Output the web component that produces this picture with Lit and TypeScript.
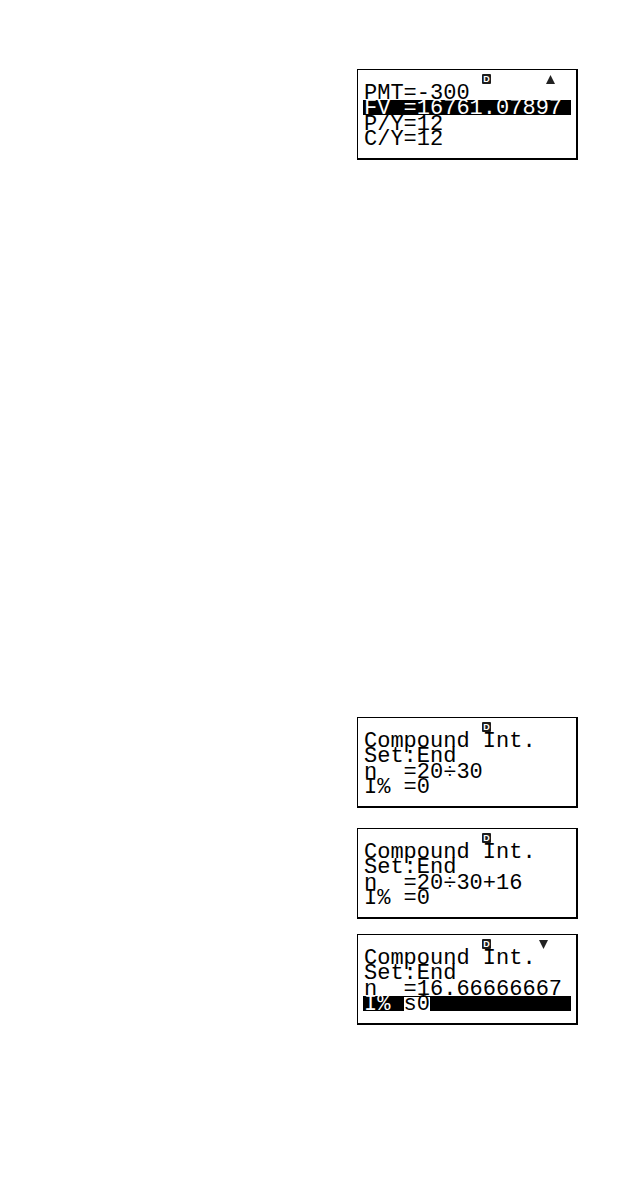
import { LitElement, html, css, nothing } from "lit";
import { customElement, property } from "lit/decorators.js";

interface Row {
  text: string;
  cursor?: string;
  selected?: boolean;
}

interface Screen {
  scroll?: "up" | "down";
  rows: Row[];
}

@customElement("lcd-screen")
class LcdScreen extends LitElement {
  @property({ attribute: false }) screen: Screen = { rows: [] };

  static styles = css`
    :host {
      display: block;
    }
    .frame {
      box-sizing: border-box;
      width: 221px;
      padding: 4px 5px 12px;
      border: 2px solid #000;
      border-left-width: 1px;
      border-top-width: 1px;
      background: #fff;
      color: #000;
    }
    .status {
      display: grid;
      grid-template-columns: 119px 9px 1fr;
      align-items: center;
      height: 10px;
      margin-bottom: 1px;
    }
    .mode {
      grid-column: 2;
      display: block;
      height: 10px;
      border-radius: 1px;
      background: #1c1c1c;
      color: #fff;
      font: bold 9px/10px "Liberation Sans", Arial, sans-serif;
      text-align: center;
    }
    .arrow {
      display: block;
      width: 9px;
      height: 9px;
      fill: #222;
    }
    .up {
      margin-left: 55px;
    }
    .down {
      margin-left: 48px;
    }
    .rows {
      display: flex;
      flex-direction: column;
      justify-content: space-between;
      height: 61px;
    }
    .row {
      height: 15px;
      margin: 0;
      padding-left: 1px;
      font: 22px/17px "Liberation Mono", "Courier New", monospace;
      white-space: pre;
    }
    .selected {
      background: #000;
      color: #fff;
    }
    .cursor {
      display: inline-block;
      height: 14px;
      line-height: 15px;
      margin-top: 1px;
      vertical-align: top;
      background: #fff;
      color: #000;
    }
  `;

  render() {
    const { scroll, rows } = this.screen;
    return html`
      <div class="frame">
        <div class="status">
          <span class="mode">D</span>
          ${scroll
            ? html`<svg class="arrow ${scroll}" viewBox="0 0 9 9" aria-hidden="true">
                <path d=${scroll === "up" ? "M4.5 0 9 9H0z" : "M0 0h9L4.5 9z"} />
              </svg>`
            : nothing}
        </div>
        <div class="rows">
          ${rows.map(
            (r) => html`<p class="row ${r.selected ? "selected" : ""}">${r.text}${r.cursor
              ? html`<span class="cursor">${r.cursor}</span>`
              : nothing}</p>`
          )}
        </div>
      </div>
    `;
  }
}

const result: Screen = {
  scroll: "up",
  rows: [
    { text: "PMT=-300" },
    { text: "FV =16761.07897", selected: true },
    { text: "P/Y=12" },
    { text: "C/Y=12" },
  ],
};

const entry: Screen[] = [
  {
    rows: [
      { text: "Compound Int." },
      { text: "Set:End" },
      { text: "n  =20÷30" },
      { text: "I% =0" },
    ],
  },
  {
    rows: [
      { text: "Compound Int." },
      { text: "Set:End" },
      { text: "n  =20÷30+16" },
      { text: "I% =0" },
    ],
  },
];

const evaluated: Screen = {
  scroll: "down",
  rows: [
    { text: "Compound Int." },
    { text: "Set:End" },
    { text: "n  =16.66666667" },
    { text: "I% ", cursor: "s0", selected: true },
  ],
};

@customElement("app-root")
class AppRoot extends LitElement {
  static styles = css`
    :host {
      display: block;
      min-height: 100vh;
      background: #fff;
    }
    .page {
      display: flex;
      flex-direction: column;
      align-items: flex-end;
      padding: 69px 52px 0 0;
    }
    .steps {
      display: flex;
      flex-direction: column;
      gap: 15px;
      margin-top: 557px;
    }
    .entry {
      display: flex;
      flex-direction: column;
      gap: 20px;
    }
  `;

  render() {
    return html`
      <main class="page">
        <lcd-screen .screen=${result}></lcd-screen>
        <section class="steps">
          <div class="entry">
            ${entry.map((s) => html`<lcd-screen .screen=${s}></lcd-screen>`)}
          </div>
          <lcd-screen .screen=${evaluated}></lcd-screen>
        </section>
      </main>
    `;
  }
}
